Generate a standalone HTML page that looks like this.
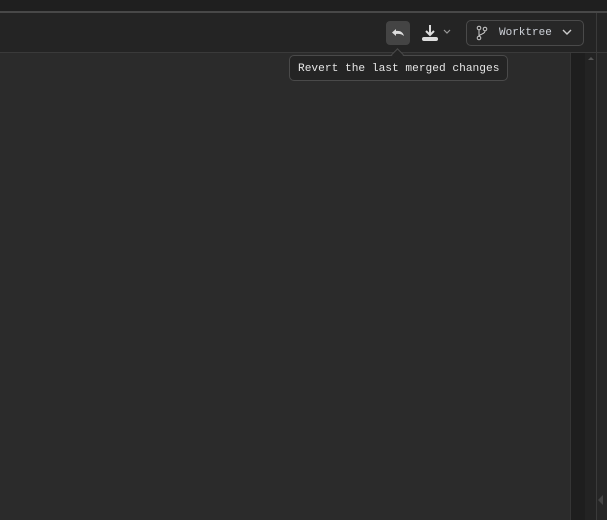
<!DOCTYPE html>
<html><head><style>
*{margin:0;padding:0;box-sizing:border-box}
body{width:607px;height:520px;background:#2b2b2b;position:relative;overflow:hidden;font-family:"Liberation Mono",monospace}
.a{position:absolute}
</style></head><body>
<div class="a" style="left:0;top:0;width:607px;height:11px;background:#1f1f1f"></div>
<div class="a" style="left:0;top:11px;width:607px;height:2px;background:#484848"></div>
<div class="a" style="left:0;top:13px;width:607px;height:39px;background:#242424"></div>
<div class="a" style="left:0;top:52px;width:607px;height:1px;background:#3a3a3a"></div>
<div class="a" style="left:596px;top:13px;width:1px;height:507px;background:#3a3a3a"></div>
<div class="a" style="left:597px;top:53px;width:10px;height:467px;background:#262626"></div>
<div class="a" style="left:570px;top:53px;width:26px;height:467px;background:#232323"></div>
<div class="a" style="left:570px;top:53px;width:15px;height:467px;background:#1e1e1e"></div>
<div class="a" style="left:570px;top:53px;width:1px;height:467px;background:#353535"></div>
<div class="a" style="left:588px;top:57px;width:0;height:0;border-left:3px solid transparent;border-right:3px solid transparent;border-bottom:3px solid #555"></div>
<div class="a" style="left:598px;top:495px;width:0;height:0;border-top:5px solid transparent;border-bottom:5px solid transparent;border-right:5px solid #444"></div>
<div class="a" style="left:386px;top:21px;width:24px;height:24px;background:#444;border-radius:4px"></div>
<svg class="a" style="left:386px;top:21px" width="24" height="24" viewBox="0 0 24 24"><path d="M6 11.5 L10 8 L10 10 C14 9.5 17 11 18 15 C16 13 13 12.5 10 13 L10 15 Z" fill="#ddd"/></svg>
<svg class="a" style="left:418px;top:21px" width="24" height="24" viewBox="0 0 24 24"><path d="M12 4 V14 M8 10 L12 14 L16 10" stroke="#ddd" stroke-width="2" fill="none"/><rect x="4" y="16" width="16" height="4" rx="2" fill="#ddd"/></svg>
<svg class="a" style="left:443px;top:29px" width="8" height="6"><path d="M1 1 L4 4 L7 1" stroke="#999" stroke-width="1.2" fill="none"/></svg>
<div class="a" style="left:466px;top:20px;width:118px;height:26px;border:1px solid #4a4a4a;border-radius:5px;background:#272727"></div>
<svg class="a" style="left:474px;top:24px" width="16" height="18" viewBox="0 0 16 18"><circle cx="5" cy="4" r="1.8" stroke="#ccc" fill="none"/><circle cx="5" cy="14" r="1.8" stroke="#ccc" fill="none"/><circle cx="11" cy="5" r="1.8" stroke="#ccc" fill="none"/><path d="M5 6 V12 M11 7 C11 10 6 10 5 12" stroke="#ccc" fill="none"/></svg>
<div class="a" style="left:499px;top:26px;font-size:11px;color:#cfd3da;line-height:14px">Worktree</div>
<svg class="a" style="left:562px;top:29px" width="10" height="7"><path d="M1 1 L5 5 L9 1" stroke="#ccc" stroke-width="1.4" fill="none"/></svg>
<div class="a" style="left:289px;top:55px;width:219px;height:26px;border:1px solid #4a4a4a;border-radius:5px;background:#242424"></div>
<div class="a" style="left:393px;top:50px;width:9px;height:9px;background:#242424;border-left:1px solid #4a4a4a;border-top:1px solid #4a4a4a;transform:rotate(45deg)"></div>
<div class="a" style="left:298px;top:62px;font-size:11.2px;color:#e6e6e6;line-height:14px;white-space:pre">Revert the last merged changes</div>
</body></html>
